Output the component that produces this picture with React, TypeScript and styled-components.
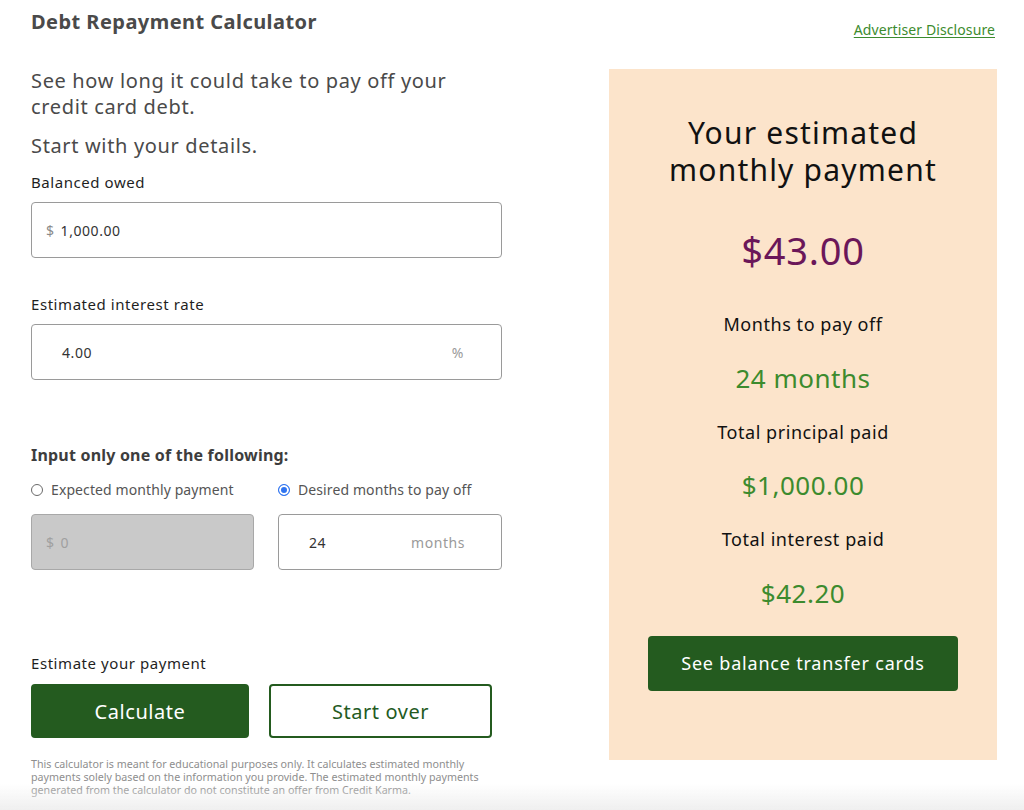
import React from "react";
import styled, { createGlobalStyle } from "styled-components";

const Global = createGlobalStyle`
  html, body { margin: 0; padding: 0; background: #ffffff; }
  body { font-family: "Noto Sans", "Open Sans", Arial, sans-serif; color: #1f1f1f; letter-spacing: 0.035em; }
  button { letter-spacing: inherit; }
  * { box-sizing: border-box; }
`;

const Page = styled.div`
  width: 1024px;
  padding: 10px 27px 0 31px;
`;

const Header = styled.header`
  display: flex;
  justify-content: space-between;
  align-items: flex-start;
  height: 58px;
`;

const Title = styled.h1`
  margin: 0;
  font-size: 20px;
  line-height: 24px;
  font-weight: 700;
  color: #4a4a4a;
  letter-spacing: 0.45px;
`;

const Disclosure = styled.a`
  margin: 11px 2px 0 0;
  font-size: 14px;
  line-height: 18px;
  color: #3c8b2e;
  text-decoration: underline;
  text-underline-offset: 2px;
  letter-spacing: 0.1px;
`;

const Main = styled.main`
  display: flex;
  justify-content: space-between;
  align-items: flex-start;
`;

const Left = styled.section`
  width: 471px;
  display: flex;
  flex-direction: column;
`;

const Intro = styled.p<{ $top?: number }>`
  margin: ${(p) => p.$top ?? 0}px 0 0;
  font-size: 20px;
  line-height: 26px;
  color: #4a4a4a;
  letter-spacing: 0.65px;
`;

const Label = styled.label<{ $top: number }>`
  display: block;
  margin: ${(p) => p.$top}px 0 10px;
  font-size: 15px;
  line-height: 20px;
  color: #1f1f1f;
`;

const Field = styled.div<{ $disabled?: boolean }>`
  display: flex;
  align-items: center;
  height: 56px;
  border: 1px solid ${(p) => (p.$disabled ? "#a8a8a8" : "#9a9a9a")};
  border-radius: 4px;
  background: ${(p) => (p.$disabled ? "#c9c9c9" : "#ffffff")};
  padding: 0 14px;
  font-size: 14px;
`;

const Affix = styled.span<{ $muted?: boolean }>`
  color: ${(p) => (p.$muted ? "#a0a0a0" : "#8a8a8a")};
  margin-right: 6px;
`;

const Value = styled.span<{ $indent?: number; $muted?: boolean }>`
  flex: 1;
  padding-left: ${(p) => p.$indent ?? 0}px;
  color: ${(p) => (p.$muted ? "#a0a0a0" : "#333333")};
`;

const Suffix = styled.span<{ $right: number }>`
  color: #9a9a9a;
  margin-right: ${(p) => p.$right}px;
`;

const SubHeading = styled.h2`
  margin: 65px 0 0;
  font-size: 16px;
  line-height: 20px;
  font-weight: 700;
  color: #3d3d3d;
  letter-spacing: 0.2px;
`;

const Choices = styled.div`
  display: grid;
  grid-template-columns: 223px 224px;
  column-gap: 24px;
  margin-top: 15px;
  row-gap: 14px;
`;

const Radio = styled.div`
  display: flex;
  align-items: center;
  gap: 8px;
  font-size: 14px;
  line-height: 20px;
  color: #555555;
  letter-spacing: 0.1px;
`;

const Dot = styled.span<{ $on?: boolean }>`
  width: 12px;
  height: 12px;
  border-radius: 50%;
  flex: none;
  border: 1px solid ${(p) => (p.$on ? "#2f74f0" : "#6a6a6a")};
  background: ${(p) => (p.$on ? "#2f74f0" : "#ffffff")};
  box-shadow: ${(p) => (p.$on ? "inset 0 0 0 2px #ffffff" : "none")};
`;

const EstimateLabel = styled.div`
  margin-top: 83px;
  font-size: 15px;
  line-height: 20px;
  color: #1f1f1f;
`;

const Buttons = styled.div`
  display: flex;
  gap: 20px;
  margin-top: 11px;
`;

const Button = styled.button<{ $variant: "solid" | "outline"; $w: number }>`
  width: ${(p) => p.$w}px;
  height: 54px;
  border-radius: 4px;
  font-family: inherit;
  font-size: 20px;
  cursor: pointer;
  border: 2px solid #245b1f;
  background: ${(p) => (p.$variant === "solid" ? "#245b1f" : "#ffffff")};
  color: ${(p) => (p.$variant === "solid" ? "#ffffff" : "#245b1f")};
`;

const Disclaimer = styled.p`
  margin: 20px 0 0;
  font-size: 10.7px;
  line-height: 13px;
  color: #8e8e8e;
  width: 480px;
  letter-spacing: 0;
`;

const Panel = styled.aside`
  width: 388px;
  height: 691px;
  margin-top: 1px;
  background: #fce4cb;
  display: flex;
  flex-direction: column;
  align-items: center;
  padding-top: 45px;
  text-align: center;
`;

const PanelTitle = styled.h2`
  margin: 0;
  font-size: 30px;
  line-height: 37px;
  font-weight: 400;
  color: #111111;
  letter-spacing: 1.2px;
`;

const Payment = styled.div`
  margin-top: 39px;
  font-size: 38px;
  line-height: 46px;
  color: #6b1759;
  letter-spacing: 0.8px;
`;

const StatLabel = styled.div<{ $top: number }>`
  margin-top: ${(p) => p.$top}px;
  font-size: 18px;
  line-height: 24px;
  color: #111111;
`;

const StatValue = styled.div`
  margin-top: 25.5px;
  font-size: 26px;
  line-height: 32px;
  color: #3c8b2e;
  letter-spacing: 0.5px;
`;

const CTA = styled.button`
  margin-top: 27px;
  width: 310px;
  height: 55px;
  border: none;
  border-radius: 4px;
  background: #245b1f;
  color: #ffffff;
  font-family: inherit;
  font-size: 18px;
  cursor: pointer;
  letter-spacing: 0.8px;
`;

const BottomFade = styled.div`
  position: fixed;
  left: 0;
  right: 0;
  bottom: 0;
  height: 26px;
  pointer-events: none;
  background: linear-gradient(to bottom, rgba(240, 240, 240, 0), #efefef);
`;

export default function App() {
  return (
    <>
      <Global />
      <Page>
        <Header>
          <Title>Debt Repayment Calculator</Title>
          <Disclosure href="#">Advertiser Disclosure</Disclosure>
        </Header>
        <Main>
          <Left>
            <Intro>See how long it could take to pay off your credit card debt.</Intro>
            <Intro $top={13}>Start with your details.</Intro>

            <Label $top={13}>Balanced owed</Label>
            <Field>
              <Affix>$</Affix>
              <Value>1,000.00</Value>
            </Field>

            <Label $top={36}>Estimated interest rate</Label>
            <Field>
              <Value $indent={16}>4.00</Value>
              <Suffix $right={23}>%</Suffix>
            </Field>

            <SubHeading>Input only one of the following:</SubHeading>
            <Choices>
              <Radio>
                <Dot />
                Expected monthly payment
              </Radio>
              <Radio>
                <Dot $on />
                Desired months to pay off
              </Radio>
              <Field $disabled>
                <Affix $muted>$</Affix>
                <Value $muted>0</Value>
              </Field>
              <Field>
                <Value $indent={16}>24</Value>
                <Suffix $right={22}>months</Suffix>
              </Field>
            </Choices>

            <EstimateLabel>Estimate your payment</EstimateLabel>
            <Buttons>
              <Button $variant="solid" $w={218}>Calculate</Button>
              <Button $variant="outline" $w={223}>Start over</Button>
            </Buttons>
            <Disclaimer>
              This calculator is meant for educational purposes only. It calculates estimated monthly
              payments solely based on the information you provide. The estimated monthly payments
              generated from the calculator do not constitute an offer from Credit Karma.
            </Disclaimer>
          </Left>

          <Panel>
            <PanelTitle>
              Your estimated
              <br />
              monthly payment
            </PanelTitle>
            <Payment>$43.00</Payment>
            <StatLabel $top={39}>Months to pay off</StatLabel>
            <StatValue>24 months</StatValue>
            <StatLabel $top={26}>Total principal paid</StatLabel>
            <StatValue>$1,000.00</StatValue>
            <StatLabel $top={26}>Total interest paid</StatLabel>
            <StatValue>$42.20</StatValue>
            <CTA>See balance transfer cards</CTA>
          </Panel>
        </Main>
      </Page>
      <BottomFade />
    </>
  );
}
